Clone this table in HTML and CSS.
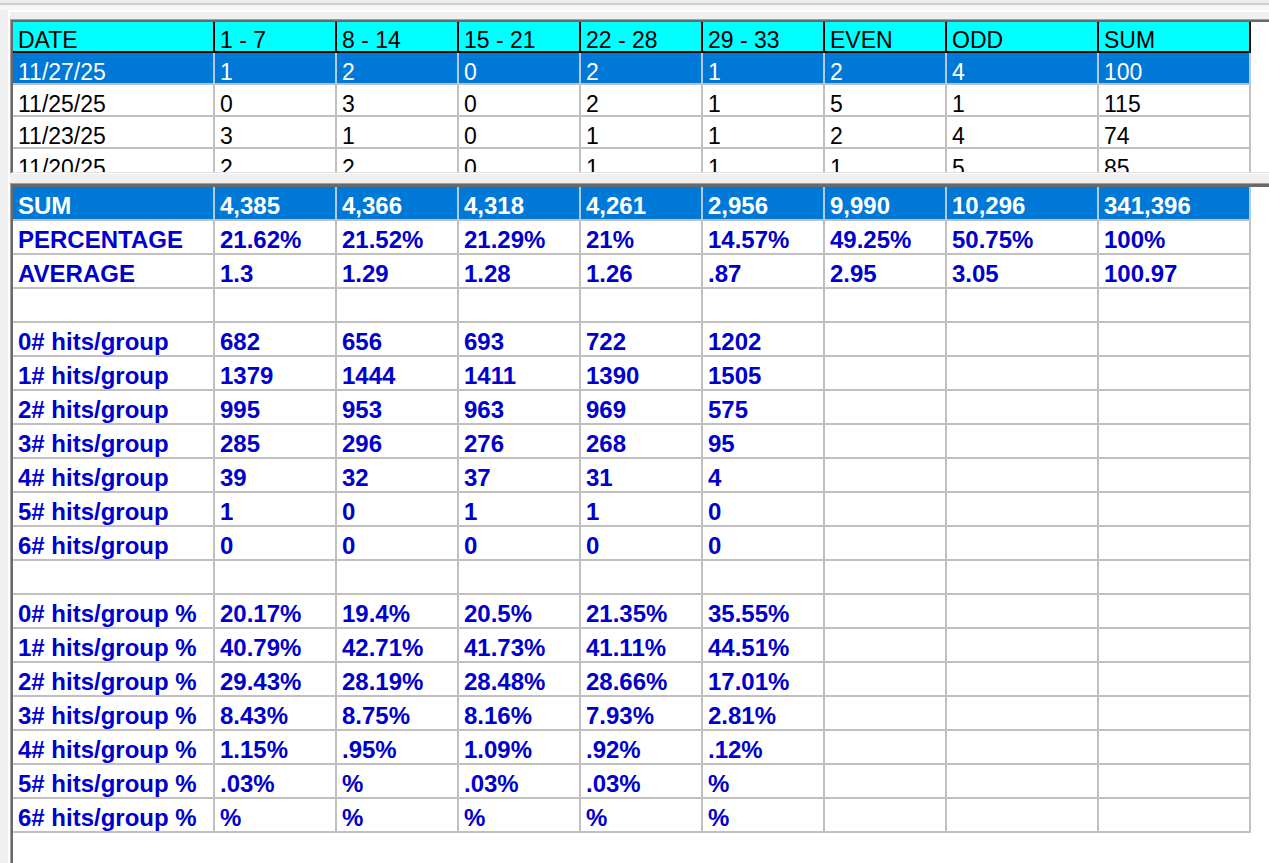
FILE: index.html
```html
<!DOCTYPE html>
<html>
<head>
<meta charset="utf-8">
<link rel="stylesheet" href="styles.css">
</head>
<body>
<div class="strip"></div>
<div class="frame">
  <div class="panel top-panel">
    <div class="panel-inner top-inner">
      <div class="grid top-grid">
        <div class="row head"><div class="c">DATE</div><div class="c">1 - 7</div><div class="c">8 - 14</div><div class="c">15 - 21</div><div class="c">22 - 28</div><div class="c">29 - 33</div><div class="c">EVEN</div><div class="c">ODD</div><div class="c">SUM</div></div>
        <div class="row sel"><div class="c">11/27/25</div><div class="c">1</div><div class="c">2</div><div class="c">0</div><div class="c">2</div><div class="c">1</div><div class="c">2</div><div class="c">4</div><div class="c">100</div></div>
        <div class="row"><div class="c">11/25/25</div><div class="c">0</div><div class="c">3</div><div class="c">0</div><div class="c">2</div><div class="c">1</div><div class="c">5</div><div class="c">1</div><div class="c">115</div></div>
        <div class="row"><div class="c">11/23/25</div><div class="c">3</div><div class="c">1</div><div class="c">0</div><div class="c">1</div><div class="c">1</div><div class="c">2</div><div class="c">4</div><div class="c">74</div></div>
        <div class="row"><div class="c">11/20/25</div><div class="c">2</div><div class="c">2</div><div class="c">0</div><div class="c">1</div><div class="c">1</div><div class="c">1</div><div class="c">5</div><div class="c">85</div></div>
      </div>
    </div>
  </div>
  <div class="panel bottom-panel">
    <div class="panel-inner bottom-inner">
      <div class="grid stats-grid">
        <div class="row sel"><div class="c">SUM</div><div class="c">4,385</div><div class="c">4,366</div><div class="c">4,318</div><div class="c">4,261</div><div class="c">2,956</div><div class="c">9,990</div><div class="c">10,296</div><div class="c">341,396</div></div>
        <div class="row"><div class="c">PERCENTAGE</div><div class="c">21.62%</div><div class="c">21.52%</div><div class="c">21.29%</div><div class="c">21%</div><div class="c">14.57%</div><div class="c">49.25%</div><div class="c">50.75%</div><div class="c">100%</div></div>
        <div class="row"><div class="c">AVERAGE</div><div class="c">1.3</div><div class="c">1.29</div><div class="c">1.28</div><div class="c">1.26</div><div class="c">.87</div><div class="c">2.95</div><div class="c">3.05</div><div class="c">100.97</div></div>
        <div class="row"><div class="c"></div><div class="c"></div><div class="c"></div><div class="c"></div><div class="c"></div><div class="c"></div><div class="c"></div><div class="c"></div><div class="c"></div></div>
        <div class="row"><div class="c">0# hits/group</div><div class="c">682</div><div class="c">656</div><div class="c">693</div><div class="c">722</div><div class="c">1202</div><div class="c"></div><div class="c"></div><div class="c"></div></div>
        <div class="row"><div class="c">1# hits/group</div><div class="c">1379</div><div class="c">1444</div><div class="c">1411</div><div class="c">1390</div><div class="c">1505</div><div class="c"></div><div class="c"></div><div class="c"></div></div>
        <div class="row"><div class="c">2# hits/group</div><div class="c">995</div><div class="c">953</div><div class="c">963</div><div class="c">969</div><div class="c">575</div><div class="c"></div><div class="c"></div><div class="c"></div></div>
        <div class="row"><div class="c">3# hits/group</div><div class="c">285</div><div class="c">296</div><div class="c">276</div><div class="c">268</div><div class="c">95</div><div class="c"></div><div class="c"></div><div class="c"></div></div>
        <div class="row"><div class="c">4# hits/group</div><div class="c">39</div><div class="c">32</div><div class="c">37</div><div class="c">31</div><div class="c">4</div><div class="c"></div><div class="c"></div><div class="c"></div></div>
        <div class="row"><div class="c">5# hits/group</div><div class="c">1</div><div class="c">0</div><div class="c">1</div><div class="c">1</div><div class="c">0</div><div class="c"></div><div class="c"></div><div class="c"></div></div>
        <div class="row"><div class="c">6# hits/group</div><div class="c">0</div><div class="c">0</div><div class="c">0</div><div class="c">0</div><div class="c">0</div><div class="c"></div><div class="c"></div><div class="c"></div></div>
        <div class="row"><div class="c"></div><div class="c"></div><div class="c"></div><div class="c"></div><div class="c"></div><div class="c"></div><div class="c"></div><div class="c"></div><div class="c"></div></div>
        <div class="row"><div class="c">0# hits/group %</div><div class="c">20.17%</div><div class="c">19.4%</div><div class="c">20.5%</div><div class="c">21.35%</div><div class="c">35.55%</div><div class="c"></div><div class="c"></div><div class="c"></div></div>
        <div class="row"><div class="c">1# hits/group %</div><div class="c">40.79%</div><div class="c">42.71%</div><div class="c">41.73%</div><div class="c">41.11%</div><div class="c">44.51%</div><div class="c"></div><div class="c"></div><div class="c"></div></div>
        <div class="row"><div class="c">2# hits/group %</div><div class="c">29.43%</div><div class="c">28.19%</div><div class="c">28.48%</div><div class="c">28.66%</div><div class="c">17.01%</div><div class="c"></div><div class="c"></div><div class="c"></div></div>
        <div class="row"><div class="c">3# hits/group %</div><div class="c">8.43%</div><div class="c">8.75%</div><div class="c">8.16%</div><div class="c">7.93%</div><div class="c">2.81%</div><div class="c"></div><div class="c"></div><div class="c"></div></div>
        <div class="row"><div class="c">4# hits/group %</div><div class="c">1.15%</div><div class="c">.95%</div><div class="c">1.09%</div><div class="c">.92%</div><div class="c">.12%</div><div class="c"></div><div class="c"></div><div class="c"></div></div>
        <div class="row"><div class="c">5# hits/group %</div><div class="c">.03%</div><div class="c">%</div><div class="c">.03%</div><div class="c">.03%</div><div class="c">%</div><div class="c"></div><div class="c"></div><div class="c"></div></div>
        <div class="row"><div class="c">6# hits/group %</div><div class="c">%</div><div class="c">%</div><div class="c">%</div><div class="c">%</div><div class="c">%</div><div class="c"></div><div class="c"></div><div class="c"></div></div>
      </div>
    </div>
  </div>
</div>
</body>
</html>
```

FILE: styles.css
```css
html, body {
  margin: 0;
  padding: 0;
  background: #f0f0f0;
  overflow: hidden;
  height: 863px;
}

body {
  font-family: "Liberation Sans", Arial, sans-serif;
}

.strip {
  height: 10px;
  background: linear-gradient(to bottom, #ececec 0, #ececec 3px, #cfcfcf 3px, #cfcfcf 5px, #f7f7f7 5px, #f7f7f7 10px);
}

.frame {
  margin-left: 8px;
  border-top: 2px solid #ffffff;
  border-left: 2px solid #ffffff;
  padding-top: 7px;
  display: flex;
  flex-direction: column;
  gap: 9px;
}

.panel {
  border-top: 1px solid #a0a0a0;
  border-left: 1px solid #a0a0a0;
  border-bottom: 1px solid #ffffff;
  background: #ffffff;
}

.panel-inner {
  border-top: 2px solid #696969;
  border-left: 2px solid #696969;
  border-bottom: 1px solid #e3e3e3;
  background: #ffffff;
  overflow: hidden;
}

.top-inner {
  height: 150px;
}

.bottom-panel {
  border-bottom: none;
}

.bottom-inner {
  border-top-width: 3px;
  border-bottom: none;
  height: 700px;
}

.grid {
  width: 1238px;
}

.row {
  display: grid;
  grid-template-columns: 202px 122px 122px 122px 122px 122px 122px 152px 152px;
}

.c {
  box-sizing: border-box;
  border-right: 2px solid #c0c0c0;
  border-bottom: 2px solid #c0c0c0;
  padding-left: 5px;
  white-space: nowrap;
  overflow: hidden;
}

/* top grid */
.top-grid .c {
  height: 32px;
  font-size: 23px;
  line-height: 24px;
  padding-top: 7px;
  color: #000000;
}

.top-grid .head .c {
  height: 31px;
  padding-top: 6px;
  background: #00ffff;
  border-right-color: #000000;
  border-bottom-color: #000000;
}

.top-grid .sel .c {
  background: #0078d7;
  color: #ffffff;
  border-right-color: #b4cbe6;
}

/* stats grid */
.stats-grid .c {
  height: 34px;
  font-size: 24px;
  font-weight: bold;
  line-height: 26px;
  padding-top: 6px;
  color: #0000cc;
}

.stats-grid .sel .c {
  background: #0078d7;
  color: #ffffff;
  border-right-color: #b4cbe6;
}
```
